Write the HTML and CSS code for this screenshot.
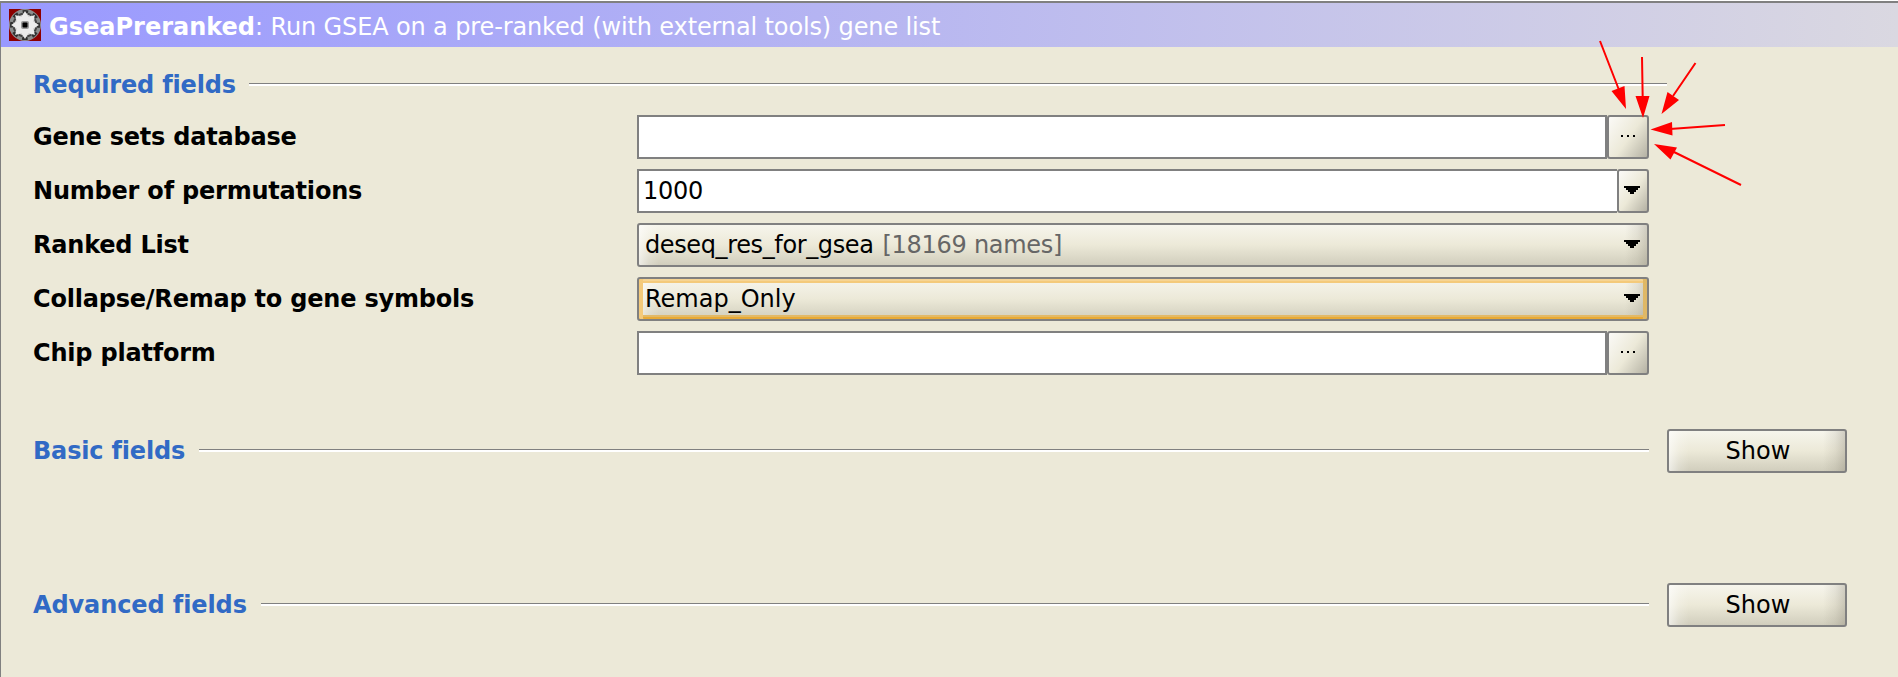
FILE: index.html
```
<!DOCTYPE html>
<html lang="en">
<head>
<meta charset="utf-8">
<title>GseaPreranked</title>
<link rel="stylesheet" href="styles.css">
</head>
<body>
<div class="window">
  <header class="titlebar">
    <svg class="logo" width="32" height="32" viewBox="0 0 32 32">
      <rect width="32" height="32" fill="#8b0000"/>
      <circle cx="16" cy="16" r="16" fill="#8c8f8f"/>
      <circle cx="16" cy="16" r="13.500" fill="none" stroke="#303030" stroke-width="3" stroke-dasharray="5.600 5" stroke-dashoffset="2.800"/>
      <circle cx="16" cy="16" r="11" fill="#d2d2d2"/>
      <circle cx="16" cy="16" r="11.500" fill="none" stroke="#444" stroke-width="2" stroke-dasharray="4 5.030" stroke-dashoffset="-2.500"/>
      <path d="M16 2l3.500 6 6.500-2-2 6.500 6 3.500-6 3.500 2 6.500-6.500-2L16 30l-3.500-6L6 26l2-6.500L2 16l6-3.500L6 6l6.500 2z" fill="#ececec"/>
      <rect x="12" y="12" width="8" height="8" rx="2" fill="#999"/>
      <rect x="13.500" y="13.500" width="5" height="5" rx="1" fill="#000"/>
    </svg>
    <h1 class="title"><b class="tool">GseaPreranked</b><span class="desc">: Run GSEA on a pre-ranked (with external tools) gene list</span></h1>
  </header>

  <main class="form">
    <section class="section required">
      <div class="heading heading-wide"><h2 class="name">Required fields</h2><span class="rule"></span></div>
      <div class="row"><label class="label">Gene sets database</label>
        <div class="control"><div class="input"></div><div class="button small more"><i class="dot"></i><i class="dot"></i><i class="dot"></i></div></div></div>
      <div class="row"><label class="label">Number of permutations</label>
        <div class="control"><div class="input number">1000</div><div class="button small drop"><svg class="arrow" width="16" height="8" shape-rendering="crispEdges"><path d="M0 0h16v2h-2v2h-2v2h-2v2h-4v-2h-2v-2h-2v-2h-2z"/></svg></div></div></div>
      <div class="row"><label class="label">Ranked List</label>
        <div class="control"><div class="button combo"><span class="value">deseq_res_for_gsea</span><span class="count">[18169 names]</span><svg class="arrow" width="16" height="8" shape-rendering="crispEdges"><path d="M0 0h16v2h-2v2h-2v2h-2v2h-4v-2h-2v-2h-2v-2h-2z"/></svg></div></div></div>
      <div class="row"><label class="label">Collapse/Remap to gene symbols</label>
        <div class="control"><div class="button combo focused"><span class="choice">Remap_Only</span><svg class="arrow" width="16" height="8" shape-rendering="crispEdges"><path d="M0 0h16v2h-2v2h-2v2h-2v2h-4v-2h-2v-2h-2v-2h-2z"/></svg></div></div></div>
      <div class="row"><label class="label">Chip platform</label>
        <div class="control"><div class="input"></div><div class="button small more"><i class="dot"></i><i class="dot"></i><i class="dot"></i></div></div></div>
    </section>
    <section class="section basic">
      <div class="heading"><h2 class="name">Basic fields</h2><span class="rule"></span></div>
      <div class="button show">Show</div>
    </section>
    <section class="section advanced">
      <div class="heading"><h2 class="name">Advanced fields</h2><span class="rule"></span></div>
      <div class="button show">Show</div>
    </section>
  </main>

  <svg class="pointers" width="160" height="160" viewBox="1590 35 160 160">
    <g stroke="#f00" stroke-width="2">
      <path d="M1600 41L1619 90M1642 57L1642.7 98M1695.500 63L1673 96M1725 125L1670 129M1741 185L1674 152"/>
    </g>
    <g fill="#f00">
      <path d="M1626 109L1611.500 91L1624.500 86zM1643 118L1635.500 96H1649.500zM1661.500 114L1667.500 92L1679 100zM1650.500 129.500L1672 122L1672.500 135.500zM1654 144L1677 147.500L1670.500 159.500z"/>
    </g>
  </svg>
</div>
</body>
</html>
```
FILE: styles.css
```
* { box-sizing: border-box; }
html {
  height: 100%;
  background: #fff;
  overflow: hidden;
}
body {
  height: 100%;
  margin: 0;
  padding-top: 1px;
  color: #000;
  font: 24px/28px "DejaVu Sans", sans-serif;
}
.window {
  position: relative;
  height: 100%;
  border-top: 2px solid #808080;
  border-left: 1px solid #808080;
  background: #ece9d8;
  overflow: hidden;
  white-space: nowrap;
}
.titlebar {
  display: flex;
  align-items: center;
  height: 44px;
  padding-left: 8px;
  background: linear-gradient(90deg, #9999ff, #dad8e1);
}
.logo { flex: none; }
.title {
  margin: 0 0 0 8px;
  padding-top: 4px;
  color: #fff;
  font-size: 24px;
  font-weight: 400;
}
.tool { display: inline-block; width: 206px; }
.desc { display: inline-block; letter-spacing: -0.13px; }
.form { padding: 24px 0 0 32px; }
.heading {
  display: flex;
  width: 1616px;
  height: 28px;
  gap: 14px;
}
.heading-wide { width: 1634px; margin-bottom: 16px; }
.name {
  width: 202px;
  margin: 0;
  color: #316ac5;
  font-size: 24px;
  font-weight: 700;
  letter-spacing: -0.18px;
}
.basic .name { width: 152px; }
.advanced .name { width: 214px; letter-spacing: -0.1px; }
.rule {
  flex: 1;
  height: 3px;
  margin-top: 12px;
  border-top: 1px solid #808080;
  background: #fff;
}
.row {
  display: grid;
  grid-template-columns: 604px 1012px;
  height: 44px;
  margin-bottom: 10px;
  line-height: 44px;
}
.label { font-weight: 700; letter-spacing: -0.21px; }
.control { display: flex; }
.input {
  flex: 1;
  height: 44px;
  border: 2px solid #808080;
  background: #fff;
  line-height: 40px;
}
.number { padding-left: 4px; border-right: 0; letter-spacing: -0.27px; }
.button {
  display: flex;
  align-items: center;
  justify-content: center;
  height: 44px;
  border: 2px solid #808080;
  border-radius: 3px;
  background:
    linear-gradient(90deg, rgba(255,255,255,.6), rgba(255,255,255,.2) 10px, rgba(255,255,255,0) 20px),
    linear-gradient(270deg, rgba(120,115,100,.3), rgba(120,115,100,.12) 10px, rgba(120,115,100,0) 22px),
    linear-gradient(#f6f5ec, #ece9d8 50%, #d1cebd);
}
.small { background: linear-gradient(125deg, #fbfaf7, #ece9d8 52%, #b5b2a4); }
.more { width: 42px; gap: 4px; padding-bottom: 2px; }
.dot { width: 2px; height: 2px; background: #000; }
.drop { width: 32px; padding-right: 2px; }
.combo {
  flex: 1;
  justify-content: flex-start;
  padding: 0 7px 0 6px;
}
.value { letter-spacing: -0.38px; }
.focused { box-shadow: inset 4px 0 #f4ca7b, inset -4px 0 #dfb866, inset 0 2px #f6d493, inset 0 4px #f4ca7b, inset 0 -2px #e9aa35, inset 0 -4px #e2b967; }
.count { margin-left: 9px; color: #666; letter-spacing: -0.28px; }
.arrow { flex: none; margin-bottom: 2px; }
.combo .arrow { margin-left: auto; }
.basic, .advanced {
  display: flex;
  align-items: center;
  gap: 18px;
}
.basic { margin-top: 54px; }
.basic .heading, .advanced .heading { flex: none; }
.advanced { margin-top: 110px; }
.show { width: 180px; padding-left: 2px; }
.pointers { position: absolute; left: 1589px; top: 32px; }
```
